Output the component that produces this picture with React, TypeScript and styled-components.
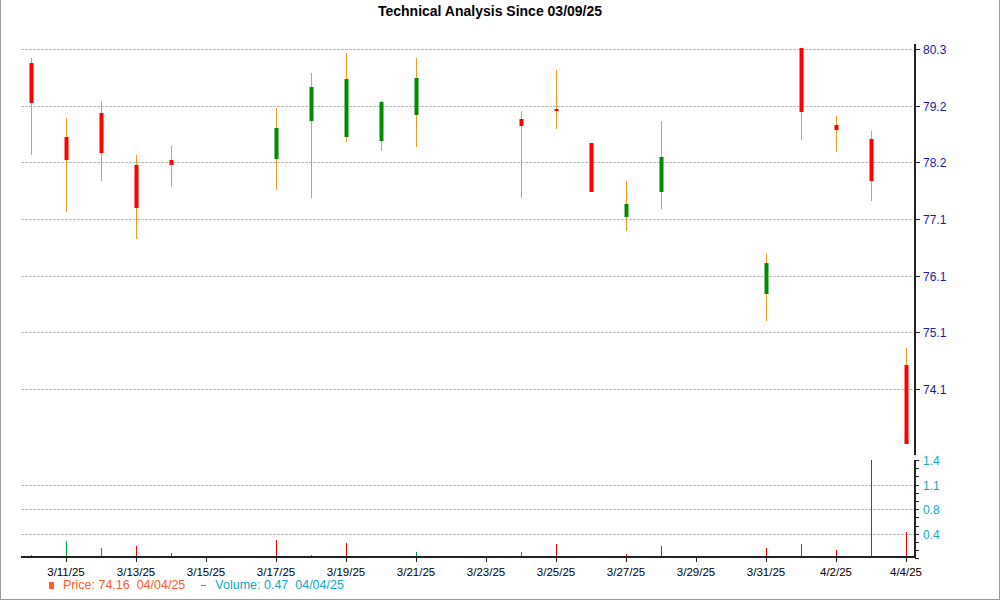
import React from 'react';
import styled, { createGlobalStyle } from 'styled-components';

const GlobalStyle = createGlobalStyle`
  html, body { margin: 0; padding: 0; background: #fff; }
  body { font-family: "Liberation Sans", Arial, sans-serif; }
`;

const dayX = (i: number) => 30 + 35 * i;
const px = (v: number) => v + 0.5;

// [dayIndex, wickTop, wickBottom, bodyTop, bodyBottom, up]
const candles: [number, number, number, number, number, boolean][] = [
  [0, 58, 155, 63, 103, false],
  [1, 118, 212, 137, 160, false],
  [2, 101, 181, 113, 153, false],
  [3, 155, 239, 165, 208, false],
  [4, 146, 187, 160, 165, false],
  [7, 108, 190, 128, 159, true],
  [8, 73, 198, 87, 121, true],
  [9, 53, 142, 79, 137, true],
  [10, 101, 151, 102, 141, true],
  [11, 58, 147, 78, 115, true],
  [14, 111, 198, 119, 126, false],
  [15, 70, 129, 109, 110, false],
  [16, 143, 192, 143, 192, false],
  [17, 181, 231, 204, 217, true],
  [18, 121, 209, 157, 192, true],
  [21, 254, 321, 263, 294, true],
  [22, 48, 140, 48, 112, false],
  [23, 116, 152, 125, 130, false],
  [24, 131, 201, 139, 181, false],
  [25, 348, 444, 365, 444, false],
];

// [dayIndex, top, up]
const volumes: [number, number, boolean][] = [
  [0, 555, true], [1, 541, true], [2, 548, true], [3, 546, false], [4, 553, false],
  [7, 540, false], [8, 555, true], [9, 543, false], [11, 552, true], [14, 552, true],
  [15, 544, false], [17, 554, false], [18, 546, false], [21, 548, false], [22, 544, false],
  [23, 550, false], [24, 460, false], [25, 532, false],
];

const priceTicks: [string, number][] = [
  ['80.3', 49], ['79.2', 106], ['78.2', 162], ['77.1', 219], ['76.1', 276], ['75.1', 332], ['74.1', 389],
];
const volTicks: [string, number][] = [['1.4', 460], ['1.1', 485], ['0.8', 509], ['0.4', 534]];
const dateLabels: [string, number][] = [
  ['3/11/25', 1], ['3/13/25', 3], ['3/15/25', 5], ['3/17/25', 7], ['3/19/25', 9], ['3/21/25', 11],
  ['3/23/25', 13], ['3/25/25', 15], ['3/27/25', 17], ['3/29/25', 19], ['3/31/25', 21], ['4/2/25', 23], ['4/4/25', 25],
];

function App() {
  return (
    <>
      <GlobalStyle />
      <Frame>
        <Title>Technical Analysis Since 03/09/25</Title>
        <ChartSvg width={998} height={556} viewBox="0 22 998 556">
          {[...priceTicks, ...volTicks.slice(1)].map(([, y]) => (
            <line key={y} x1={20} x2={914} y1={px(y)} y2={px(y)} stroke="#bbb" strokeDasharray="3 1" />
          ))}
          {candles.map(([d, wt, wb, bt, bb, up]) => (
            <g key={d}>
              <line x1={px(dayX(d))} x2={px(dayX(d))} y1={wt} y2={wb} stroke="#f09a20" />
              <rect x={dayX(d) - 1.5} y={bt} width={4} height={Math.max(bb - bt, 2)} fill={up ? '#008c00' : '#ff0000'} />
            </g>
          ))}
          {volumes.map(([d, t, up]) => (
            <line key={d} x1={px(dayX(d))} x2={px(dayX(d))} y1={t} y2={557} stroke={up ? '#00a040' : '#ff0000'} />
          ))}
          <line x1={914} x2={914} y1={44} y2={455} stroke="#222" strokeWidth={2} />
          {priceTicks.map(([label, y]) => (
            <g key={label}>
              <line x1={914} x2={919} y1={px(y)} y2={px(y)} stroke="#222" />
              <text x={922} y={y + 5} fill="#1a1aa0" fontSize={12}>{label}</text>
            </g>
          ))}
          <line x1={914} x2={914} y1={460} y2={558} stroke="#222" strokeWidth={2} />
          {Array.from({ length: 13 }, (_, i) => (
            <line key={i} x1={914} x2={918} y1={px(Math.round(460 + i * 8.2))} y2={px(Math.round(460 + i * 8.2))} stroke="#222" />
          ))}
          {volTicks.map(([label, y]) => (
            <text key={label} x={922} y={y + 5} fill="#10a8c0" fontSize={12}>{label}</text>
          ))}
          <line x1={20} x2={915} y1={557} y2={557} stroke="#222" strokeWidth={2} />
          {dateLabels.map(([label, d]) => (
            <g key={label}>
              <line x1={px(dayX(d))} x2={px(dayX(d))} y1={557} y2={562} stroke="#222" />
              <text x={dayX(d)} y={576} textAnchor="middle" fontSize={11.5} fill="#000">{label}</text>
            </g>
          ))}
        </ChartSvg>
        <Legend>
          <LegendItem $color="#ff5a30">
            <Swatch />
            Price: 74.16&nbsp; 04/04/25
          </LegendItem>
          <LegendItem $color="#10a8c0">
            <Dash />
            Volume: 0.47&nbsp; 04/04/25
          </LegendItem>
        </Legend>
      </Frame>
    </>
  );
}

export default App;

const Frame = styled.div`
  width: 998px;
  height: 599px;
  border: 1px solid #999;
  border-top: none;
  display: flex;
  flex-direction: column;
  overflow: hidden;
`;

const Title = styled.div`
  height: 22px;
  line-height: 22px;
  text-align: center;
  font-size: 14px;
  font-weight: bold;
  color: #000;
  padding-right: 20px;
`;

const ChartSvg = styled.svg`
  display: block;
  font-family: "Liberation Sans", Arial, sans-serif;
`;

const Legend = styled.div`
  display: flex;
  gap: 16px;
  padding-left: 48px;
  font-size: 12.5px;
  height: 18px;
  align-items: center;
  margin-top: -2px;
`;

const LegendItem = styled.div<{ $color: string }>`
  display: flex;
  align-items: center;
  gap: 9px;
  color: ${(p) => p.$color};
  & > span { background: ${(p) => p.$color}; }
`;

const Swatch = styled.span`
  width: 5px;
  height: 7px;
`;

const Dash = styled.span`
  width: 5px;
  height: 1px;
`;
